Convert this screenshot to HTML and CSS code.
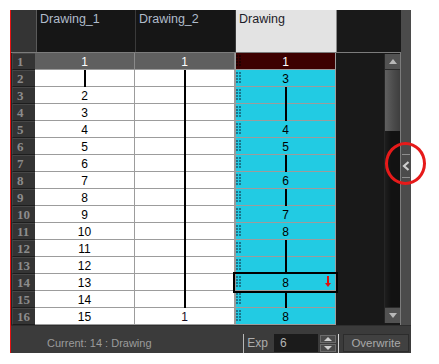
FILE: index.html
```html
<!DOCTYPE html>
<html>
<head>
<meta charset="utf-8">
<link rel="stylesheet" href="styles.css">
</head>
<body>
<div class="panel">
  <div class="head">
    <div class="corner"></div>
    <div class="colhead">Drawing_1</div>
    <div class="colhead">Drawing_2</div>
    <div class="colhead sel">Drawing</div>
    <div class="headfill"></div>
  </div>

  <div class="body">
    <div class="sheet">
      <div class="rh">1</div><div class="c top">1</div><div class="c top">1</div><div class="c d dtop"><span class="wt">1</span></div>
      <div class="rh">2</div><div class="c hold"></div><div class="c hold"></div><div class="c d">3</div>
      <div class="rh">3</div><div class="c">2</div><div class="c hold"></div><div class="c d hold"></div>
      <div class="rh">4</div><div class="c">3</div><div class="c hold"></div><div class="c d hold"></div>
      <div class="rh">5</div><div class="c">4</div><div class="c hold"></div><div class="c d">4</div>
      <div class="rh">6</div><div class="c">5</div><div class="c hold"></div><div class="c d">5</div>
      <div class="rh">7</div><div class="c">6</div><div class="c hold"></div><div class="c d hold"></div>
      <div class="rh">8</div><div class="c">7</div><div class="c hold"></div><div class="c d">6</div>
      <div class="rh">9</div><div class="c">8</div><div class="c hold"></div><div class="c d hold"></div>
      <div class="rh">10</div><div class="c">9</div><div class="c hold"></div><div class="c d">7</div>
      <div class="rh">11</div><div class="c">10</div><div class="c hold"></div><div class="c d">8</div>
      <div class="rh">12</div><div class="c">11</div><div class="c hold"></div><div class="c d hold"></div>
      <div class="rh">13</div><div class="c">12</div><div class="c hold"></div><div class="c d hold"></div>
      <div class="rh">14</div><div class="c">13</div><div class="c hold"></div><div class="c d cur-cell">8<svg class="arrow" width="6" height="12" viewBox="0 0 6 12"><rect x="2" y="0" width="2" height="8" fill="#e01010"/><polygon points="0,7 6,7 3,11" fill="#e01010"/></svg></div>
      <div class="rh">15</div><div class="c">14</div><div class="c hold"></div><div class="c d hold"></div>
      <div class="rh">16</div><div class="c">15</div><div class="c"><span class="dk">1</span></div><div class="c d">8</div>
    </div>
    <div class="side">
      <div class="scroll">
        <div class="sbtn"><svg width="8" height="5" viewBox="0 0 8 5"><polygon points="0,5 8,5 4,0" fill="#b8b8b8"/></svg></div>
        <div class="thumb"></div>
        <div class="track"></div>
        <div class="sbtn"><svg width="8" height="5" viewBox="0 0 8 5"><polygon points="0,0 8,0 4,5" fill="#b8b8b8"/></svg></div>
      </div>
    </div>
  </div>

  <div class="strip">
    <div class="collapse">
      <svg width="8" height="10" viewBox="0 0 8 10"><polyline points="6.5,1 2,5 6.5,9" fill="none" stroke="#cfcfcf" stroke-width="2.2"/></svg>
    </div>
  </div>

  <div class="bar">
    <div class="current">Current: 14 : Drawing</div>
    <div class="sep"></div>
    <div class="exp">Exp</div>
    <div class="field">6</div>
    <div class="spin">
      <div class="sp"><svg width="8" height="4" viewBox="0 0 8 4"><polygon points="0,4 8,4 4,0" fill="#cfcfcf"/></svg></div>
      <div class="sp"><svg width="8" height="4" viewBox="0 0 8 4"><polygon points="0,0 8,0 4,4" fill="#cfcfcf"/></svg></div>
    </div>
    <div class="sep sep2"></div>
    <div class="btn">Overwrite</div>
  </div>

  <div class="ring"></div>
</div>
</body>
</html>
```

FILE: styles.css
```css
html, body {
  margin: 0;
  padding: 0;
  background: #ffffff;
}

.panel {
  position: relative;
  margin: 10px 0 0 10px;
  width: 400px;
  height: 343px;
  border-left: 1px solid #e31414;
  display: grid;
  grid-template-columns: 390px 10px;
  grid-template-rows: 42px 273px 28px;
  font-family: "Liberation Sans", Arial, sans-serif;
}

/* ---------- header ---------- */
.head {
  display: flex;
  background: #191919;
}
.corner {
  width: 25px;
  background: #343434;
  border-right: 1px solid #5a5a5a;
}
.colhead {
  width: 99px;
  background: #161616;
  border-right: 1px solid #3a3a3a;
  color: #b0bccb;
  font-size: 12.5px;
  line-height: 15px;
  padding: 2px 0 0 3px;
  box-sizing: border-box;
}
.colhead:nth-child(3) {
  width: 100px;
}
.colhead.sel {
  width: 101px;
  background: #e3e3e3;
  color: #1c1c28;
  border-right: 1px solid #8a8a8a;
}
.headfill {
  flex: 1;
  background: #191919;
}

/* ---------- body ---------- */
.body {
  display: flex;
  border-top: 1px solid #7c7c7c;
  border-right: 1px solid #7c7c7c;
  background: #191919;
}
.sheet {
  display: grid;
  grid-template-columns: 24px 100px 100px 101px;
  grid-auto-rows: 17px;
  background: #242424;
}
.rh {
  margin-left: 1px;
  box-sizing: border-box;
  background: #343434;
  border-top: 1px solid #474747;
  border-left: 1px solid #434343;
  border-bottom: 1px solid #1d1d1d;
  color: #8c8c8c;
  font-family: "Liberation Serif", "Times New Roman", serif;
  font-weight: bold;
  font-size: 13px;
  line-height: 14px;
  padding: 1px 0 0 4px;
}
.c {
  position: relative;
  box-sizing: border-box;
  background: #ffffff;
  border-right: 1px solid #9c9c9c;
  border-bottom: 1px solid #9c9c9c;
  color: #000000;
  font-size: 12px;
  line-height: 15px;
  padding-top: 2px;
  text-align: center;
}
.c.top {
  background: #5f5f5f;
  color: #ffffff;
  border-right-color: #8a8a8a;
}
.dk {
  color: #140a1e;
}
.wt {
  color: #ffffff;
}
.c.d {
  background: #22cbe3;
  border-left: 1px solid #9c9c9c;
}
.c.d.dtop {
  background: #3d0000;
}
.c.d::before {
  content: "";
  position: absolute;
  left: 0;
  top: 2px;
  width: 5px;
  height: 11px;
  background-image:
    linear-gradient(to right, rgba(0,0,0,0) 2px, #22cbe3 2px),
    linear-gradient(to bottom, #17788f 2px, rgba(0,0,0,0) 2px);
  background-size: 3px 3px, 3px 3px;
}
.c.d.dtop::before {
  background-image:
    linear-gradient(to right, rgba(0,0,0,0) 2px, #3d0000 2px),
    linear-gradient(to bottom, #220000 2px, rgba(0,0,0,0) 2px);
}
.c.hold::after {
  content: "";
  position: absolute;
  left: calc(50% - 1px);
  top: 0;
  bottom: -1px;
  width: 2px;
  background: #000000;
}
.c.cur-cell {
  z-index: 2;
  outline: 2px solid #000000;
  outline-offset: 0;
}
.arrow {
  position: absolute;
  right: 4px;
  top: 2px;
}

.side {
  flex: 1;
  display: flex;
  justify-content: flex-end;
  padding: 1px 0 2px 0;
}
.scroll {
  width: 15px;
  display: flex;
  flex-direction: column;
  background: #111111;
  border-left: 1px solid #262626;
}
.sbtn {
  height: 15px;
  background: #525252;
  display: flex;
  align-items: center;
  justify-content: center;
  border-bottom: 1px solid #2a2a2a;
}
.sbtn:last-child {
  border-bottom: none;
  border-top: 1px solid #2a2a2a;
}
.thumb {
  height: 61px;
  background: linear-gradient(to right, #606060, #4a4a4a 60%, #3e3e3e);
}
.track {
  flex: 1;
  background: linear-gradient(to right, #1e1e1e, #121212 40%);
}

/* ---------- right strip ---------- */
.strip {
  grid-column: 2;
  grid-row: 1 / 3;
  background: #4b4b4b;
  display: flex;
  flex-direction: column;
  align-items: center;
}
.collapse {
  margin-top: 144px;
  width: 8px;
  height: 22px;
  border-top: 1px solid #8e8e8e;
  border-bottom: 1px solid #8e8e8e;
  display: flex;
  align-items: center;
  justify-content: center;
}

/* ---------- bottom bar ---------- */
.bar {
  grid-column: 1 / 3;
  grid-row: 3;
  background: #3b3b3b;
  display: flex;
  align-items: center;
  padding: 8px 2px 1px 0;
  box-sizing: border-box;
  border-top: 1px solid #2e2e2e;
}
.current {
  flex: 1;
  padding-left: 36px;
  color: #9c9c9c;
  font-size: 11px;
}
.sep {
  width: 1px;
  height: 19px;
  background: #b8b8b8;
}
.exp {
  margin: 0 6px 0 3px;
  color: #acacac;
  font-size: 12px;
}
.field {
  width: 44px;
  height: 18px;
  box-sizing: border-box;
  background: #1b1b1b;
  color: #b4b4b4;
  font-size: 12px;
  line-height: 18px;
  padding-left: 6px;
}
.spin {
  margin-left: 2px;
  width: 16px;
  display: flex;
  flex-direction: column;
  gap: 1px;
}
.sp {
  height: 8px;
  box-sizing: border-box;
  background: #4a4a4a;
  border: 1px solid #6c6c6c;
  display: flex;
  align-items: center;
  justify-content: center;
}
.sep2 {
  margin-left: 2px;
  background: #d8d8d8;
}
.btn {
  margin-left: 4px;
  width: 66px;
  height: 18px;
  box-sizing: border-box;
  background: #414141;
  border: 1px solid #2c2c2c;
  color: #a9a9a9;
  font-size: 11.5px;
  line-height: 16px;
  text-align: center;
}

/* ---------- annotation ring ---------- */
.ring {
  position: absolute;
  left: 374px;
  top: 132px;
  width: 41px;
  height: 43px;
  box-sizing: border-box;
  border: 3px solid #e61a1a;
  border-radius: 50%;
}
```
